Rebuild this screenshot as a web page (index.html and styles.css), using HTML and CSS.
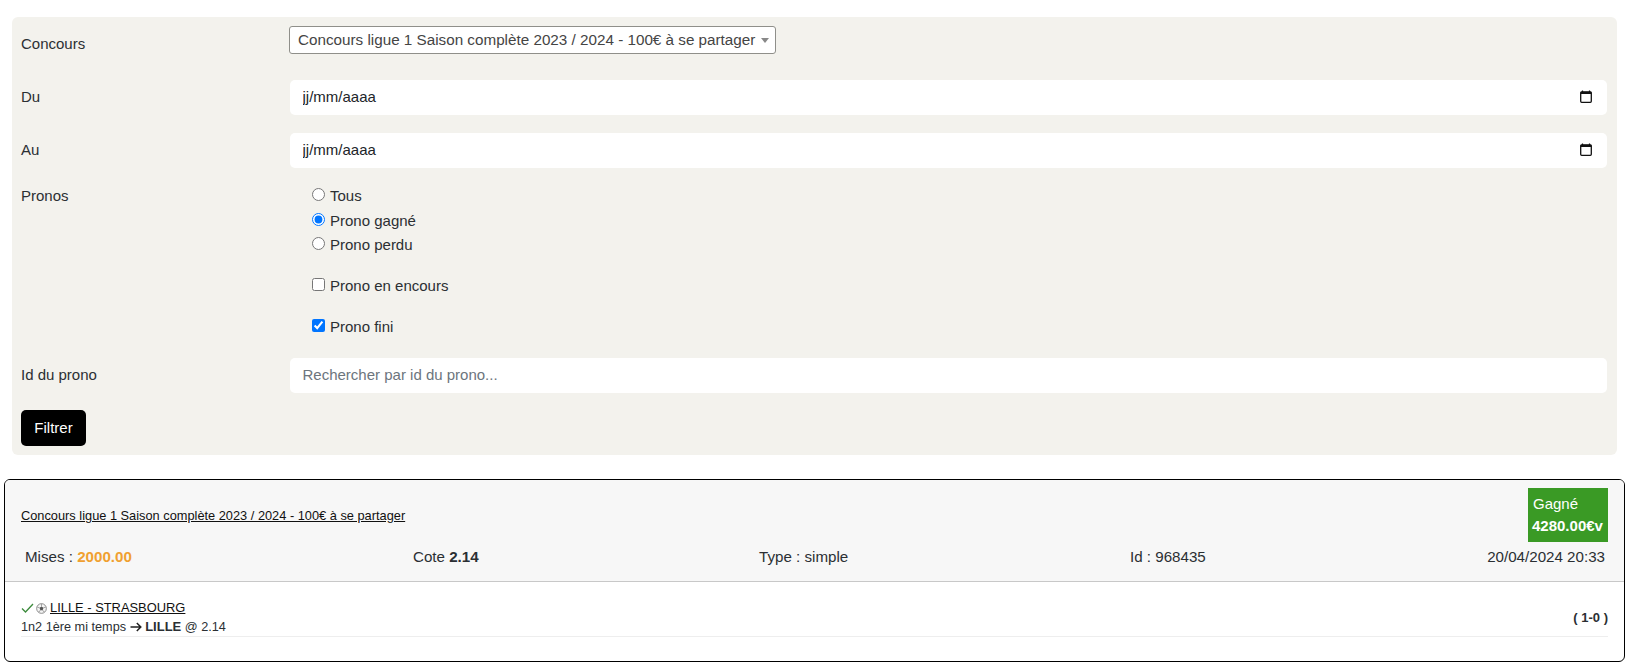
FILE: index.html
```html
<!DOCTYPE html>
<html lang="fr">
<head>
<meta charset="utf-8">
<title>Pronos</title>
<link rel="stylesheet" href="styles.css">
</head>
<body>
<form class="filters">
  <div class="row row-select">
    <label class="row-label">Concours</label>
    <div class="select-wrap">
      <select class="select"><option>Concours ligue 1 Saison complète 2023 / 2024 - 100€ à se partager</option></select>
    </div>
  </div>
  <div class="row row-field">
    <label class="row-label">Du</label>
    <div class="field">
      <input class="field-input" type="text" value="jj/mm/aaaa">
      <svg class="cal" viewBox="0 0 12 13" width="12" height="13"><path d="M2.5 0.5v1.5M9.500 0.500v1.500" stroke="#111" stroke-width="1.200"/><rect x="0.700" y="1.800" width="10.600" height="10.500" fill="none" stroke="#111" stroke-width="1.300" rx="1"/><rect x="0.700" y="1.800" width="10.600" height="2.200" fill="#111"/></svg>
    </div>
  </div>
  <div class="row row-field">
    <label class="row-label">Au</label>
    <div class="field">
      <input class="field-input" type="text" value="jj/mm/aaaa">
      <svg class="cal" viewBox="0 0 12 13" width="12" height="13"><path d="M2.5 0.5v1.500M9.500 0.500v1.500" stroke="#111" stroke-width="1.200"/><rect x="0.700" y="1.800" width="10.600" height="10.500" fill="none" stroke="#111" stroke-width="1.300" rx="1"/><rect x="0.700" y="1.800" width="10.600" height="2.200" fill="#111"/></svg>
    </div>
  </div>
  <div class="row row-options">
    <label class="row-label">Pronos</label>
    <div class="options">
      <div class="radios">
        <label class="opt"><input type="radio" name="p">Tous</label>
        <label class="opt"><input type="radio" name="p" checked>Prono gagné</label>
        <label class="opt"><input type="radio" name="p">Prono perdu</label>
      </div>
      <label class="opt opt-check"><input type="checkbox">Prono en encours</label>
      <label class="opt opt-check"><input type="checkbox" checked>Prono fini</label>
    </div>
  </div>
  <div class="row row-id">
    <label class="row-label">Id du prono</label>
    <div class="field field-id"><input class="field-input" type="text" placeholder="Rechercher par id du prono..."></div>
  </div>
  <button class="btn" type="button">Filtrer</button>
</form>

<section class="card">
  <header class="card-head">
    <div class="head-top">
      <a class="card-title" href="#">Concours ligue 1 Saison complète 2023 / 2024 - 100€ à se partager</a>
      <div class="badge"><span>Gagné</span><strong>4280.00€v</strong></div>
    </div>
    <div class="stats">
      <span class="st st-mises">Mises : <b class="amount">2000.00</b></span>
      <span class="st st-cote">Cote <b>2.14</b></span>
      <span class="st st-type">Type : simple</span>
      <span class="st st-id">Id : 968435</span>
      <span class="st st-date">20/04/2024 20:33</span>
    </div>
  </header>
  <div class="card-body">
    <div class="bet">
      <div class="bet-main">
        <div class="bet-title">
          <svg class="check" viewBox="0 0 13 10" width="13" height="10"><path d="M1 5.500l3.500 3.500L12 1" fill="none" stroke="#3d8b3d" stroke-width="1.300"/></svg>
          <svg class="ball" viewBox="0 0 12 12" width="11" height="11"><circle cx="6" cy="6" r="5.300" fill="#f4f4f4" stroke="#777" stroke-width="0.900"/><path d="M6 3.800l2.100 1.500-.8 2.500H4.700l-.8-2.500z" fill="#555"/><path d="M6 3.800V1M8.100 5.300l2.500-.9M7.300 7.800l1.500 2.100M4.700 7.800L3.200 9.900M3.900 5.300l-2.500-.9" stroke="#777" stroke-width="0.700"/></svg>
          <a href="#" class="match">LILLE - STRASBOURG</a>
        </div>
        <div class="bet-line">1n2 1ère mi temps <svg class="arrow" viewBox="0 0 12 10" width="12" height="10"><path d="M0.500 5H10.500M6.800 1l4 4-4 4" fill="none" stroke="#222" stroke-width="1.500"/></svg> <b>LILLE</b> @ 2.14</div>
      </div>
      <b class="score">( 1-0 )</b>
    </div>
  </div>
</section>
</body>
</html>
```
FILE: styles.css
```css
* { box-sizing: border-box; }
html, body { margin: 0; padding: 0; }
body {
  background: #fff;
  color: #2b2f33;
  font-family: "Liberation Sans", Arial, sans-serif;
  font-size: 15px;
  line-height: 24px;
  padding: 17px 5px 0 4px;
}
.filters {
  background: #f3f2ed;
  border-radius: 6px;
  margin: 0 8px;
  padding: 9px 10px 8px 9px;
  height: 438px;
}
.row { display: flex; }
.row-label { width: 269px; flex: none; }
.row-select { height: 36px; margin-bottom: 18px; align-items: center; }
.select-wrap { position: relative; align-self: flex-start; margin-left: -1px; }
.select-wrap::after {
  content: "";
  position: absolute;
  right: 7px;
  top: 12px;
  border-left: 4px solid transparent;
  border-right: 4px solid transparent;
  border-top: 5px solid #888;
}
.select {
  appearance: none;
  display: block;
  width: 487px;
  height: 28px;
  padding: 0 18px 0 8px;
  background: #fff;
  border: 1px solid #8f8f8a;
  border-radius: 3px;
  color: #444;
  font: inherit;
  font-size: 15.240px;
}
.row-field { height: 35px; margin-bottom: 18px; align-items: center; }
.row-field .row-label { margin-top: -2px; }
.field {
  flex: 1;
  height: 35px;
  display: flex;
  align-items: center;
  background: #fff;
  border-radius: 5px;
  padding: 0 15px 2px 12.500px;
}
.field-id { padding-bottom: 0; }
.field-input {
  flex: 1;
  min-width: 0;
  border: 0;
  outline: 0;
  padding: 0;
  background: transparent;
  color: #212529;
  font: inherit;
}
.field-input::placeholder { color: #6c757d; opacity: 1; }
.cal { flex: none; display: block; }
.row-options { margin-top: -2px; margin-bottom: 0; }
.options { padding-left: 22px; display: flex; flex-direction: column; }
.radios { display: flex; flex-direction: column; margin-bottom: 16px; }
.opt { display: flex; align-items: center; height: 24.500px; }
.opt input { margin: 0 5px 3px 0; width: 13px; height: 13px; accent-color: #0075ff; }
.opt-check { margin-bottom: 17px; height: 24px; }
.row-id { height: 35px; margin-top: 2px; margin-bottom: 17px; align-items: center; }
.btn {
  display: block;
  width: 65px;
  height: 36px;
  background: #000;
  color: #fff;
  border: 0;
  border-radius: 5px;
  font: inherit;
  padding: 0;
}
.card {
  margin-top: 24px;
  height: 183px;
  border: 1px solid #000;
  border-radius: 6px;
  overflow: hidden;
}
.card-head {
  background: #f7f7f7;
  border-bottom: 1px solid #c8c8c8;
  height: 102px;
  padding: 8px 16px 0 16px;
}
.head-top { display: flex; justify-content: space-between; align-items: center; height: 54px; }
.card-title { color: #111; font-size: 12.800px; line-height: 16px; padding-top: 2px; }
.badge {
  width: 80px;
  height: 54px;
  background: #3a9a25;
  color: #fff;
  padding: 4px 5px;
  display: flex;
  flex-direction: column;
  line-height: 23px;
}
.badge strong { margin-top: -1px; margin-left: -1px; }
.stats { height: 30px; display: flex; align-items: center; padding: 0 4px; font-size: 15.150px; }
.st { flex: none; }
.st-mises { width: 388px; }
.st-cote { width: 346px; }
.st-type { width: 371px; }
.st-id { flex: 1; }
.st-date { margin-right: -1px; }
.amount { color: #f0a030; }
.card-body { padding: 16px 16px 0 16px; }
.bet {
  display: flex;
  justify-content: space-between;
  align-items: center;
  border-bottom: 1px solid #eee;
}
.bet-title { display: flex; align-items: center; gap: 2px; font-size: 12.900px; line-height: 20px; }
.match { color: #111; margin-left: 1px; }
.bet-line { font-size: 12.700px; line-height: 18px; }
.arrow { vertical-align: -1px; }
.bet-line b { font-size: 13px; }
.score { font-size: 13px; margin-top: 1px; }
```
